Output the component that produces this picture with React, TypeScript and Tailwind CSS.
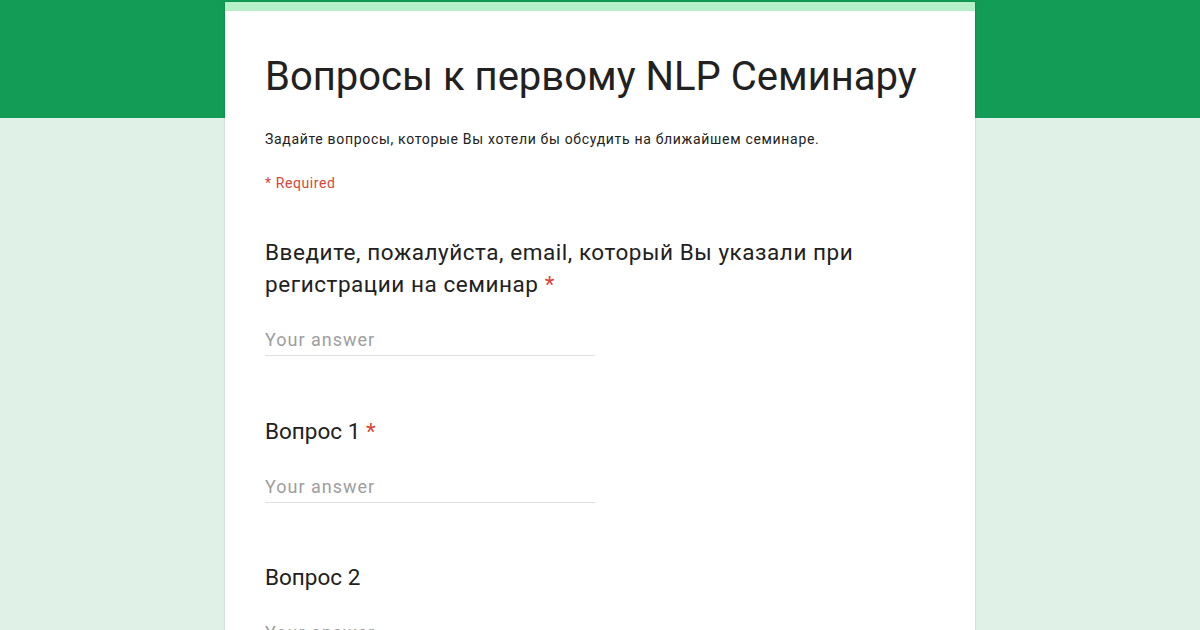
export default function App() {
  const font = { fontFamily: "Roboto, 'Noto Sans', sans-serif" };
  return (
    <div className="w-[1200px] h-[630px] overflow-hidden bg-[#e0f1e8]" style={font}>
      <div className="h-[118px] bg-[#129c55]" />
      <div className="-mt-[117px] mx-auto w-[750px] h-[700px] bg-white shadow-[0_0_2px_rgba(0,0,0,0.2)]">
        <div className="h-[9px] bg-[#b6f0c8] mt-[1px]" />
        <div className="px-10 pt-[42px]">
          <h1 className="text-[40px] leading-[48px] text-[#212121]">Вопросы к первому NLP Семинару</h1>
          <p className="mt-[28px] text-[14px] leading-[20px] tracking-[0.68px] text-[#212121]">
            Задайте вопросы, которые Вы хотели бы обсудить на ближайшем семинаре.
          </p>
          <p className="mt-[24px] text-[14px] leading-[20px] tracking-[0.6px] text-[#db4437]">* Required</p>

          <div className="mt-[43px]">
            <div className="text-[22.5px] leading-[32px] tracking-[0.55px] text-[#212121]">
              Введите, пожалуйста, email, который Вы указали при регистрации на семинар{" "}
              <span className="text-[#db4437]">*</span>
            </div>
            <div className="mt-[28px] w-[330px] border-b border-[#e0e0e0] pb-[3px] text-[18px] leading-[24px] tracking-[1px] text-[#9e9e9e]">
              Your answer
            </div>
          </div>

          <div className="mt-[59px]">
            <div className="text-[22.5px] leading-[32px] text-[#212121]">
              Вопрос 1 <span className="text-[#db4437]">*</span>
            </div>
            <div className="mt-[28px] w-[330px] border-b border-[#e0e0e0] pb-[3px] text-[18px] leading-[24px] tracking-[1px] text-[#9e9e9e]">
              Your answer
            </div>
          </div>

          <div className="mt-[58px]">
            <div className="text-[22.5px] leading-[32px] text-[#212121]">Вопрос 2</div>
            <div className="mt-[28px] w-[330px] border-b border-[#e0e0e0] pb-[3px] text-[18px] leading-[24px] tracking-[1px] text-[#9e9e9e]">
              Your answer
            </div>
          </div>
        </div>
      </div>
    </div>
  );
}
